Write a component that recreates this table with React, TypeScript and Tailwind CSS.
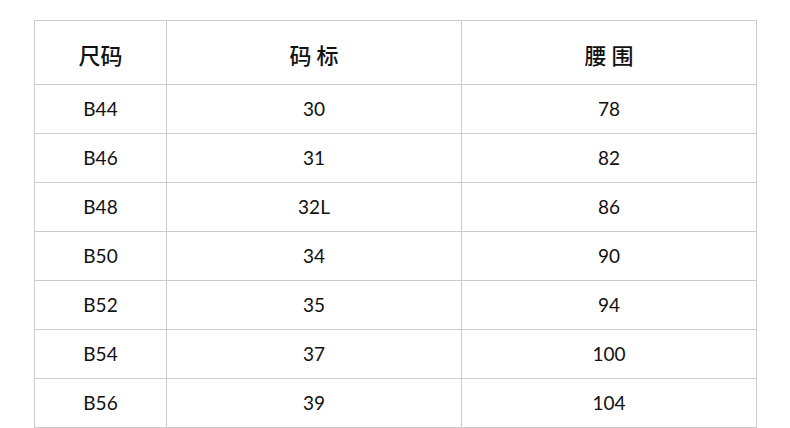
import React from "react";

const rows: [string, string, string][] = [
  ["B44", "30", "78"],
  ["B46", "31", "82"],
  ["B48", "32L", "86"],
  ["B50", "34", "90"],
  ["B52", "35", "94"],
  ["B54", "37", "100"],
  ["B56", "39", "104"],
];

export default function App() {
  return (
    <div className="w-[790px] h-[428px] bg-white pt-[20px] pl-[34px] [font-family:Lato,'Noto_Sans_CJK_SC',sans-serif] text-[#111]">
      <table className="border-collapse table-fixed w-[722px]">
        <colgroup>
          <col className="w-[132px]" />
          <col className="w-[295px]" />
          <col className="w-[295px]" />
        </colgroup>
        <thead>
          <tr className="h-[64px]">
            {["尺码", "码 标", "腰 围"].map((h) => (
              <th
                key={h}
                className="border border-[#cccccc] p-0 text-center align-middle text-[22px] font-medium whitespace-pre [font-family:'Noto_Sans_CJK_SC',sans-serif] leading-none pt-[3px]"
              >
                {h}
              </th>
            ))}
          </tr>
        </thead>
        <tbody>
          {rows.map((r) => (
            <tr key={r[0]} className="h-[49px]">
              {r.map((c, i) => (
                <td
                  key={i}
                  className="border border-[#cccccc] p-0 pb-[2px] text-center align-middle text-[19px] leading-none"
                >
                  {c}
                </td>
              ))}
            </tr>
          ))}
        </tbody>
      </table>
    </div>
  );
}
